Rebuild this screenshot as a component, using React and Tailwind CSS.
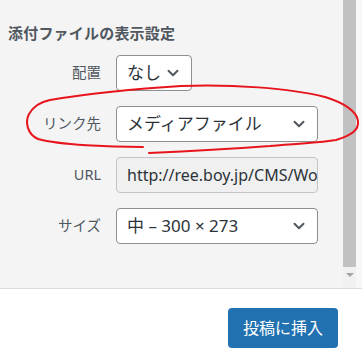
import { ChevronDown } from 'lucide-react';

const font = { fontFamily: '"Noto Sans", "Noto Sans CJK JP", sans-serif' };

function Row({ label, children }) {
  return (
    <div className="flex items-center h-[36px]">
      <div className="w-[93px] text-right text-[14.5px] text-[#50575e]">{label}</div>
      <div className="ml-[15px]">{children}</div>
    </div>
  );
}

function Select({ value, width }) {
  return (
    <div
      className="h-[36px] flex items-center justify-between border border-[#8c8f94] rounded-[4px] bg-white pl-[10px] pr-[9px] text-[17px] text-[#2c3338]"
      style={{ width }}
    >
      <span className="whitespace-nowrap">{value}</span>
      <ChevronDown className="w-[18px] h-[18px] text-[#50575e]" strokeWidth={2.6} />
    </div>
  );
}

export default function App() {
  return (
    <div className="relative w-[362px] h-[358px] bg-white overflow-hidden" style={font}>
      <div className="flex h-[289px] border-b border-[#dcdcde]">
        {/* Settings panel */}
        <div className="w-[343px] bg-[#f4f4f4] pl-[8px] pt-[23px]">
          <h2 className="text-[15px] font-bold text-[#50575e] leading-[20px] tracking-[0.2px]">添付ファイルの表示設定</h2>
          <div className="mt-[12px] flex flex-col gap-[15px]">
            <Row label="配置">
              <Select value="なし" width={76} />
            </Row>
            <Row label="リンク先">
              <Select value="メディアファイル" width={202} />
            </Row>
            <Row label="URL">
              <div className="w-[202px] h-[36px] flex items-center border border-[#c3c4c7] rounded-[4px] bg-[#f0f0f1] pl-[10px] overflow-hidden text-[16px] text-[#2c3338] whitespace-nowrap">
                http://ree.boy.jp/CMS/Wo
              </div>
            </Row>
            <Row label="サイズ">
              <Select value="中 – 300 × 273" width={202} />
            </Row>
          </div>
        </div>
        {/* Scrollbar */}
        <div className="w-[13px] bg-[#f1f1f1] flex flex-col">
          <div className="h-[267px] bg-[#c1c1c1]" />
          <div className="flex justify-center pt-[6px]">
            <div className="w-0 h-0 border-l-[4px] border-r-[4px] border-t-[4px] border-l-transparent border-r-transparent border-t-[#a3a3a3]" />
          </div>
        </div>
        <div className="flex-1 bg-[#f7f7f7]" />
      </div>
      <div className="flex justify-end pr-[24px] pt-[19px]">
        <button className="w-[110px] h-[40px] rounded-[4px] bg-[#2271b1] text-white text-[16px]">投稿に挿入</button>
      </div>

      {/* red hand-drawn annotation */}
      <svg className="absolute inset-0 pointer-events-none" width="362" height="358">
        <path
          d="M143 147 C110 147 60 145 38 139 C27 134 25 122 29 114 C33 107 40 102 50 100 C80 95 130 89 181 86 C230 84 290 88 325 97 C345 103 357 112 358 121 C359 130 352 135 336 140 C320 143 300 143 270 146 C230 149 195 151 149 153"
          fill="none"
          stroke="#e8141c"
          strokeWidth="2"
          strokeLinecap="round"
        />
      </svg>
    </div>
  );
}
